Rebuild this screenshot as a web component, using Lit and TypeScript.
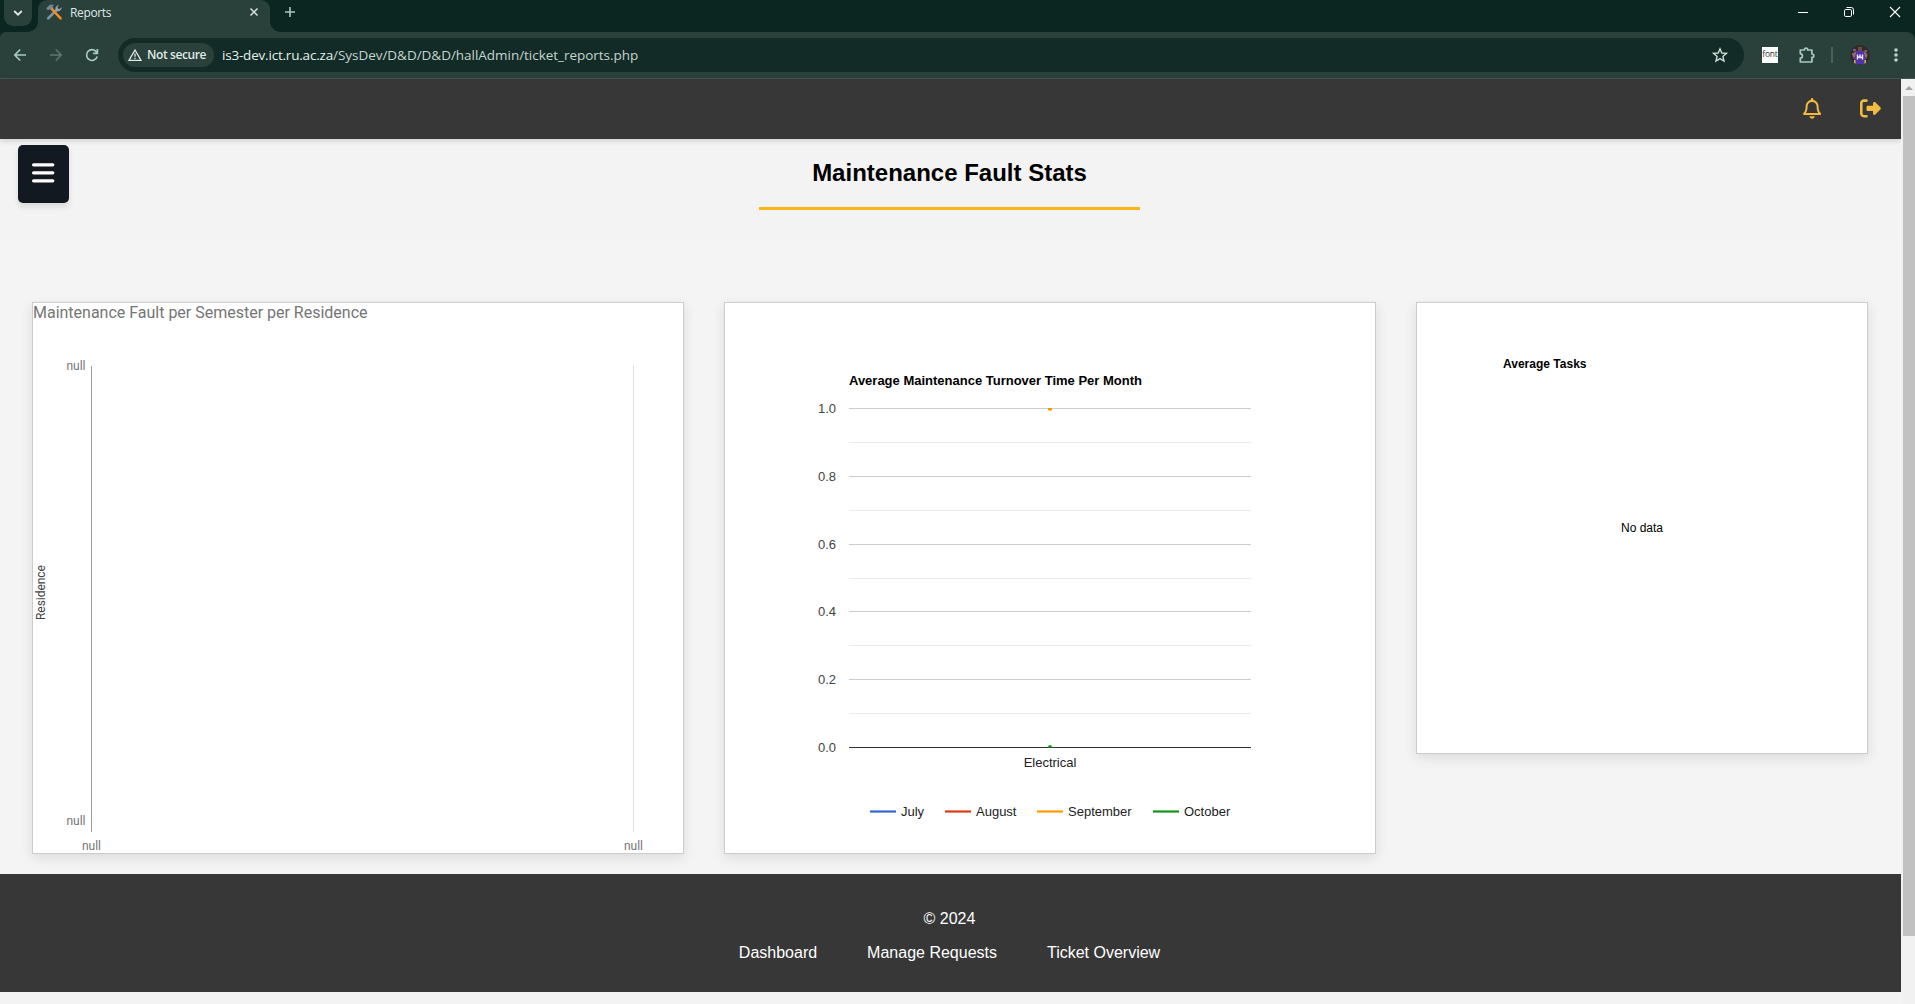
import { LitElement, html, svg, css } from "lit";
import { customElement } from "lit/decorators.js";

@customElement("browser-bar")
class BrowserBar extends LitElement {
  static styles = css`
    :host { display: block; height: 79px; font-family: "Open Sans", "Noto Sans", sans-serif; color: #dfe9e6; }
    svg { display: block; flex: none; overflow: visible; }
    .strip { height: 32px; background: #0b2621; display: flex; box-sizing: border-box; padding-left: 4px; }
    .search { width: 28px; height: 26px; background: #29403b; border-radius: 0 0 9px 9px; display: flex; align-items: center; justify-content: center; }
    .tab { width: 232px; height: 32px; margin-left: 6px; background: #29403b; border-radius: 9px 9px 0 0; position: relative; display: flex; box-sizing: border-box; padding: 4px 12px 0 8px; }
    .tab::before, .tab::after { content: ""; position: absolute; bottom: 0; width: 10px; height: 10px; }
    .tab::before { left: -10px; background: radial-gradient(circle at 0 0, transparent 9.5px, #29403b 10px); }
    .tab::after { right: -10px; background: radial-gradient(circle at 100% 0, transparent 9.5px, #29403b 10px); }
    .name { font-size: 12px; line-height: 18px; margin-left: 8px; flex: 1; letter-spacing: -0.35px; }
    .close { margin-top: 4px; }
    .plus { margin: 7px 0 0 15px; }
    .win { margin: 7px 15px 0 auto; display: flex; gap: 36px; }
    .under { background: #0b2621; }
    .tools { height: 47px; box-sizing: border-box; background: #29403b; border-bottom: 1px solid #465650; border-radius: 6px 8px 0 0; display: flex; align-items: center; padding: 0 15px 0 12px; }
    .nav { display: flex; gap: 20px; }
    .omni { margin-left: 18px; width: 1626px; height: 34px; box-sizing: border-box; background: #122b27; border-radius: 17px; display: flex; align-items: center; padding: 0 16px 0 5px; }
    .chip { width: 91px; height: 24px; box-sizing: border-box; background: #29403b; border-radius: 12px; display: flex; align-items: center; padding-left: 5px; gap: 5px; }
    .chip span { font-size: 12px; font-weight: 600; letter-spacing: -0.4px; white-space: nowrap; line-height: 16px; }
    .url { margin-left: 8px; font-size: 13.5px; flex: 1; white-space: nowrap; line-height: 18px; letter-spacing: -0.03px; color: #c5d3cf; }
    .url b { font-weight: 400; color: #e4efec; letter-spacing: -0.2px; }
    .font { margin-left: 18px; width: 16px; height: 16px; background: #fff; color: #333; font-size: 8.5px; line-height: 13px; display: flex; justify-content: center; overflow: hidden; letter-spacing: -0.2px; }
    .puzzle { margin-left: 20px; }
    .sep { width: 2px; height: 16px; background: #46605a; margin-left: 15px; }
    .face { margin-left: 17px; }
    .dots { margin-left: auto; }
  `;
  render() {
    return html`
      <div class="strip">
        <div class="search"><svg width="10" height="6" viewBox="0 0 10 6" fill="none" stroke="#dfe9e6" stroke-width="1.8"><path d="M1.2 1 5 4.7 8.8 1" /></svg></div>
        <div class="tab">
          <svg width="16" height="16" viewBox="0 0 16 16" fill="none">
            <path d="M2.2 14.3 10 6.5" stroke="#7f97a5" stroke-width="2.6" stroke-linecap="round" />
            <path d="M10 6.9C8.6 4.6 9.7 1.4 13 .9L11.4 3l.5 1.6 1.7.4L15.700 3.300c.3 2.800-2.500 5-5.700 3.600z" fill="#8fa5b2" />
            <path d="M.3 4.300 3.600 1C5.200.1 7 .2 8.300 1.200 7 1.300 6.500 2 6.600 2.800l1 1.500-2.300 2.300-1.600-1.400-2 1.100z" fill="#72899a" />
            <path d="m6.300 5.500 8.300 8.800" stroke="#fb8c1b" stroke-width="2.500" stroke-linecap="round" />
          </svg>
          <span class="name">Reports</span>
          <svg class="close" width="8" height="8" viewBox="0 0 8 8" stroke="#d5e2de" stroke-width="1.5"><path d="m.5.5 7 7m0-7-7 7" /></svg>
        </div>
        <svg class="plus" width="10" height="10" viewBox="0 0 10 10" stroke="#a9c9c1" stroke-width="1.6"><path d="M5 0v10M0 5h10" /></svg>
        <div class="win">
          <svg width="10" height="10" viewBox="0 0 10 10"><path d="M0 5h10v1H0z" fill="#fff" /></svg>
          <svg width="10" height="10" viewBox="0 0 10 10" fill="none" stroke="#fff"><rect x=".5" y="2.500" width="7" height="7" rx="1.300" /><path d="M2.500.5h4.800a2.200 2.200 0 0 1 2.200 2.200v4.800" /></svg>
          <svg width="10" height="10" viewBox="0 0 10 10" stroke="#fff" stroke-width="1.100"><path d="m0 0 10 10M10 0 0 10" /></svg>
        </div>
      </div>
      <div class="under"><div class="tools">
        <div class="nav">
          <svg width="16" height="16" viewBox="0 0 16 16" fill="none" stroke="#a9c9c1" stroke-width="1.7"><path d="M14 8H3M8.200 2.500 2.800 8l5.400 5.500" /></svg>
          <svg width="16" height="16" viewBox="0 0 16 16" fill="none" stroke="#5d756f" stroke-width="1.7"><path d="M2 8h11M7.800 2.500 13.200 8l-5.400 5.500" /></svg>
          <svg width="16" height="16" viewBox="0 0 16 16" fill="none" stroke="#a9c9c1" stroke-width="1.7"><path d="M13.200 9.500A5.400 5.400 0 1 1 12.300 4.800L13.300 6M13.400 2v4.300H9.100" /></svg>
        </div>
        <div class="omni">
          <div class="chip">
            <svg width="14" height="14" viewBox="0 0 14 14" fill="none" stroke="#dfe9e6" stroke-width="1.300"><path d="M7 2 13 12.400H1zM7 5.500v3.300M7 9.800v1.300" /></svg>
            <span>Not secure</span>
          </div>
          <div class="url"><b>is3-dev.ict.ru.ac.za</b>/SysDev/D&amp;D/D&amp;D/hallAdmin/ticket_reports.php</div>
          <svg width="16" height="16" viewBox="0 0 16 16" fill="none" stroke="#c9dcd6" stroke-width="1.400"><path d="m8 1.700 1.800 4.300 4.700.4-3.600 3.100 1.100 4.600L8 11.600l-4 2.500 1.100-4.600L1.500 6.400l4.700-.4z" /></svg>
        </div>
        <div class="font">font</div>
        <svg class="puzzle" width="18" height="18" viewBox="0 0 18 18" fill="none" stroke="#a9c9c1" stroke-width="1.700" stroke-linejoin="round"><path d="M2.300 4h4c0-2.600 3.400-2.600 3.400 0h4.200v4c2.600 0 2.600 3.400 0 3.400V16H2.300v-3.800c2.900-.4 2.900-4.200 0-4.600z" /></svg>
        <div class="sep"></div>
        <svg class="face" width="20" height="20" viewBox="0 0 20 20">
          <circle cx="10" cy="10" r="10" fill="#302a2b" />
          <path d="M3 4h3v2H3zM14 5h3v2h-3zM2 8h2v2H2z" fill="#796964" />
          <path d="M8 2h4v5H8z" fill="#70483c" />
          <path d="m5 5 2.500 1h5L15 5l1 5-1 9.300H5L4 10z" fill="#4e35ae" />
          <path d="M2.500 10 5 6l1 2-2 6zM17.500 10 15 6l-1 2 2 6z" fill="#9a6c5b" />
          <path d="M7.500 9.500v5M7.500 12H10m2.500-2.500v5M10 9.500v3h2.500" stroke="#f1edff" stroke-width="1.400" fill="none" />
          <path d="M4 15h1.500v3.500L4 18zM14.500 15H16v3l-1.500.5z" fill="#e5b535" />
        </svg>
        <svg class="dots" width="8" height="16" viewBox="0 0 8 16" fill="#b8d2cb"><circle cx="4" cy="3" r="1.800" /><circle cx="4" cy="8" r="1.800" /><circle cx="4" cy="13" r="1.800" /></svg>
      </div></div>`;
  }
}

const TICKS = [
  { label: "1.0", y: 105.5 }, { label: "0.8", y: 173.5 }, { label: "0.6", y: 241.5 },
  { label: "0.4", y: 308.5 }, { label: "0.2", y: 376.5 }, { label: "0.0", y: 444.5 },
];
const MINOR = [139.5, 207.5, 275.5, 342.5, 410.5];
const LEGEND = [
  { name: "July", x: 145, dark: "#3366cc", light: "#85a3e0" },
  { name: "August", x: 220, dark: "#dc3912", light: "#ea8871" },
  { name: "September", x: 312, dark: "#ff9900", light: "#ffc266" },
  { name: "October", x: 428, dark: "#109618", light: "#70c074" },
];

@customElement("chart-card")
class ChartCard extends LitElement {
  static properties = { kind: { type: String } };
  declare kind: string;
  static styles = css`
    :host { display: block; background: #fff; border: 1px solid #ccc; box-shadow: 0 4px 12px rgba(0, 0, 0, 0.1); }
    svg { display: block; font-family: "Liberation Sans", Arial, sans-serif; }
    .material { font-family: Roboto, sans-serif; font-size: 12px; fill: #757575; }
    .heading { font-size: 16px; }
    .axis-name { fill: #424242; }
    .tick { font-size: 13px; fill: #444; }
    .label { font-size: 13px; fill: #222; }
    .bold { font-weight: 700; font-size: 13px; fill: #000; }
    .small { font-size: 12px; }
  `;
  private faults() {
    return html`<svg class="material" width="650" height="550">
      <text class="heading" x="0" y="15" textLength="334.500">Maintenance Fault per Semester per Residence</text>
      <path d="M58.500 63v466" stroke="#9e9e9e" />
      <path d="M600.500 62v467" stroke="#e0e0e0" />
      <text x="52.500" y="67" text-anchor="end">null</text>
      <text x="52.500" y="522" text-anchor="end">null</text>
      <text x="58.500" y="547" text-anchor="middle">null</text>
      <text x="600.500" y="547" text-anchor="middle">null</text>
      <text class="axis-name" transform="translate(12 289.500) rotate(-90)" text-anchor="middle" textLength="55">Residence</text>
    </svg>`;
  }
  private turnover() {
    return html`<svg width="650" height="550">
      <text class="bold" x="124" y="82" textLength="293">Average Maintenance Turnover Time Per Month</text>
      ${MINOR.map((y) => svg`<path d="M124 ${y}h402" stroke="#ebebeb" />`)}
      ${TICKS.map((t, i) => svg`<path d="M124 ${t.y}h402" stroke=${i === 5 ? "#333" : "#ccc"} />
        <text class="tick" x="111" y=${t.y + 4.5} text-anchor="end">${t.label}</text>`)}
      <path d="M323 105h4v1.500l-1 1.300h-2l-1-1.300z" fill="#ff9900" />
      <path d="M323 444.500v-1l1-1.300h2l1 1.300v1z" fill="#109618" />
      <text class="label" x="325" y="464" text-anchor="middle">Electrical</text>
      ${LEGEND.map((l) => svg`<path d="M${l.x} 508.500h26" stroke=${l.light} stroke-width="3" />
        <path d="M${l.x} 508.500h26" stroke=${l.dark} />
        <text class="label" x=${l.x + 31} y="513">${l.name}</text>`)}
    </svg>`;
  }
  private tasks() {
    return html`<svg width="450" height="450">
      <text class="bold small" x="86" y="65" textLength="83.500">Average Tasks</text>
      <text class="small" x="225" y="229" text-anchor="middle">No data</text>
    </svg>`;
  }
  render() {
    return this.kind === "faults" ? this.faults() : this.kind === "turnover" ? this.turnover() : this.tasks();
  }
}

@customElement("app-root")
class AppRoot extends LitElement {
  static styles = css`
    :host { display: block; width: 1915px; height: 1004px; overflow: hidden; font-family: "Liberation Sans", Arial, sans-serif; }
    svg { display: block; }
    .view { display: flex; height: 925px; }
    .page { width: 1901px; background: #f3f3f3; display: flex; flex-direction: column; }
    .top { height: 60px; flex: none; background: #373737; box-shadow: 0 2px 5px rgba(0, 0, 0, 0.15); box-sizing: border-box; padding: 0 20px 1px 0; display: flex; align-items: center; justify-content: flex-end; gap: 39.500px; fill: #f0bb40; }
    .hero { height: 101px; flex: none; box-sizing: border-box; display: grid; grid-template-columns: 51px 1fr 51px; padding: 6px 20px 0 18px; }
    .menu { width: 51px; height: 58px; border-radius: 5px; background: #121921; display: flex; align-items: center; justify-content: center; box-sizing: border-box; padding-bottom: 2px; box-shadow: 0 4px 6px rgba(0, 0, 0, 0.1); }
    .title { justify-self: center; width: 381px; height: 65px; box-sizing: border-box; border-bottom: 3px solid #fdb515; text-align: center; }
    h1 { margin: 14px 0 0; font-size: 24px; line-height: 28px; font-weight: 700; white-space: nowrap; }
    .cards { height: 634px; flex: none; background: #f4f4f4; box-sizing: border-box; padding: 62px 32px 0; display: flex; align-items: flex-start; gap: 40px; }
    .foot { height: 118px; flex: none; position: relative; background: #373737; color: #fff; font-size: 16px; line-height: 18px; text-align: center; box-sizing: border-box; padding: 36px 2px 0 0; }
    .links { display: flex; justify-content: center; gap: 50px; margin-top: 16px; }
    .scroll { width: 14px; background: #f1f1f1; display: flex; flex-direction: column; align-items: flex-end; }
    .arrow { margin: 7px 2px 6px 0; }
    .thumb { width: 12px; height: 840px; background: #c1c1c1; }
  `;
  render() {
    return html`
      <browser-bar></browser-bar>
      <div class="view">
        <div class="page">
          <header class="top">
            <svg width="18.200" height="20.800" viewBox="0 0 448 512"><path d="M224 0c-17.700 0-32 14.300-32 32V51.200C119 66 64 130.600 64 208v25.400c0 45.400-15.500 89.500-43.800 124.900L5.300 377c-5.800 7.200-6.900 17.100-2.900 25.400S14.800 416 24 416H424c9.200 0 17.600-5.300 21.600-13.600s2.900-18.200-2.900-25.400l-14.900-18.600C399.500 322.900 384 278.800 384 233.400V208c0-77.400-55-142-128-156.800V32c0-17.700-14.300-32-32-32zm0 96c61.900 0 112 50.100 112 112v25.400c0 47.900 13.900 94.600 39.700 134.600H72.300C98.100 328 112 281.300 112 233.400V208c0-61.900 50.100-112 112-112zm64 352H224 160c0 17 6.700 33.300 18.700 45.300s28.300 18.700 45.300 18.700s33.300-6.700 45.300-18.700s18.700-28.300 18.700-45.300z" /></svg>
            <svg width="20.800" height="20.800" viewBox="0 0 512 512"><path d="M377.900 105.900L500.700 228.700c7.200 7.200 11.300 17.100 11.300 27.300s-4.100 20.100-11.300 27.300L377.900 406.100c-6.400 6.400-15 9.900-24 9.900c-18.700 0-33.900-15.200-33.900-33.900l0-62.100-128 0c-17.700 0-32-14.300-32-32l0-64c0-17.700 14.300-32 32-32l128 0 0-62.100c0-18.700 15.200-33.900 33.900-33.900c9 0 17.600 3.600 24 9.900zM160 96L96 96c-17.700 0-32 14.300-32 32l0 256c0 17.700 14.300 32 32 32l64 0c17.700 0 32 14.300 32 32s-14.300 32-32 32l-64 0c-53 0-96-43-96-96L0 128C0 75 43 32 96 32l64 0c17.700 0 32 14.300 32 32s-14.300 32-32 32z" /></svg>
          </header>
          <section class="hero">
            <div class="menu"><svg width="22.400" height="25.600" viewBox="0 0 448 512" fill="#fff"><path d="M0 96C0 78.300 14.300 64 32 64H416c17.700 0 32 14.300 32 32s-14.300 32-32 32H32C14.300 128 0 113.700 0 96zM0 256c0-17.700 14.300-32 32-32H416c17.700 0 32 14.300 32 32s-14.300 32-32 32H32c-17.700 0-32-14.300-32-32zM448 416c0 17.700-14.300 32-32 32H32c-17.700 0-32-14.300-32-32s14.300-32 32-32H416c17.700 0 32 14.300 32 32z" /></svg></div>
            <div class="title"><h1>Maintenance Fault Stats</h1></div>
          </section>
          <main class="cards">
            <chart-card kind="faults"></chart-card>
            <chart-card kind="turnover"></chart-card>
            <chart-card kind="tasks"></chart-card>
          </main>
          <footer class="foot">
            <div>© 2024</div>
            <nav class="links"><span>Dashboard</span><span>Manage Requests</span><span>Ticket Overview</span></nav>
          </footer>
        </div>
        <div class="scroll">
          <svg class="arrow" width="8" height="4" viewBox="0 0 8 4" fill="#a3a3a3"><path d="M4 0 8 4H0z" /></svg>
          <div class="thumb"></div>
        </div>
      </div>`;
  }
}
